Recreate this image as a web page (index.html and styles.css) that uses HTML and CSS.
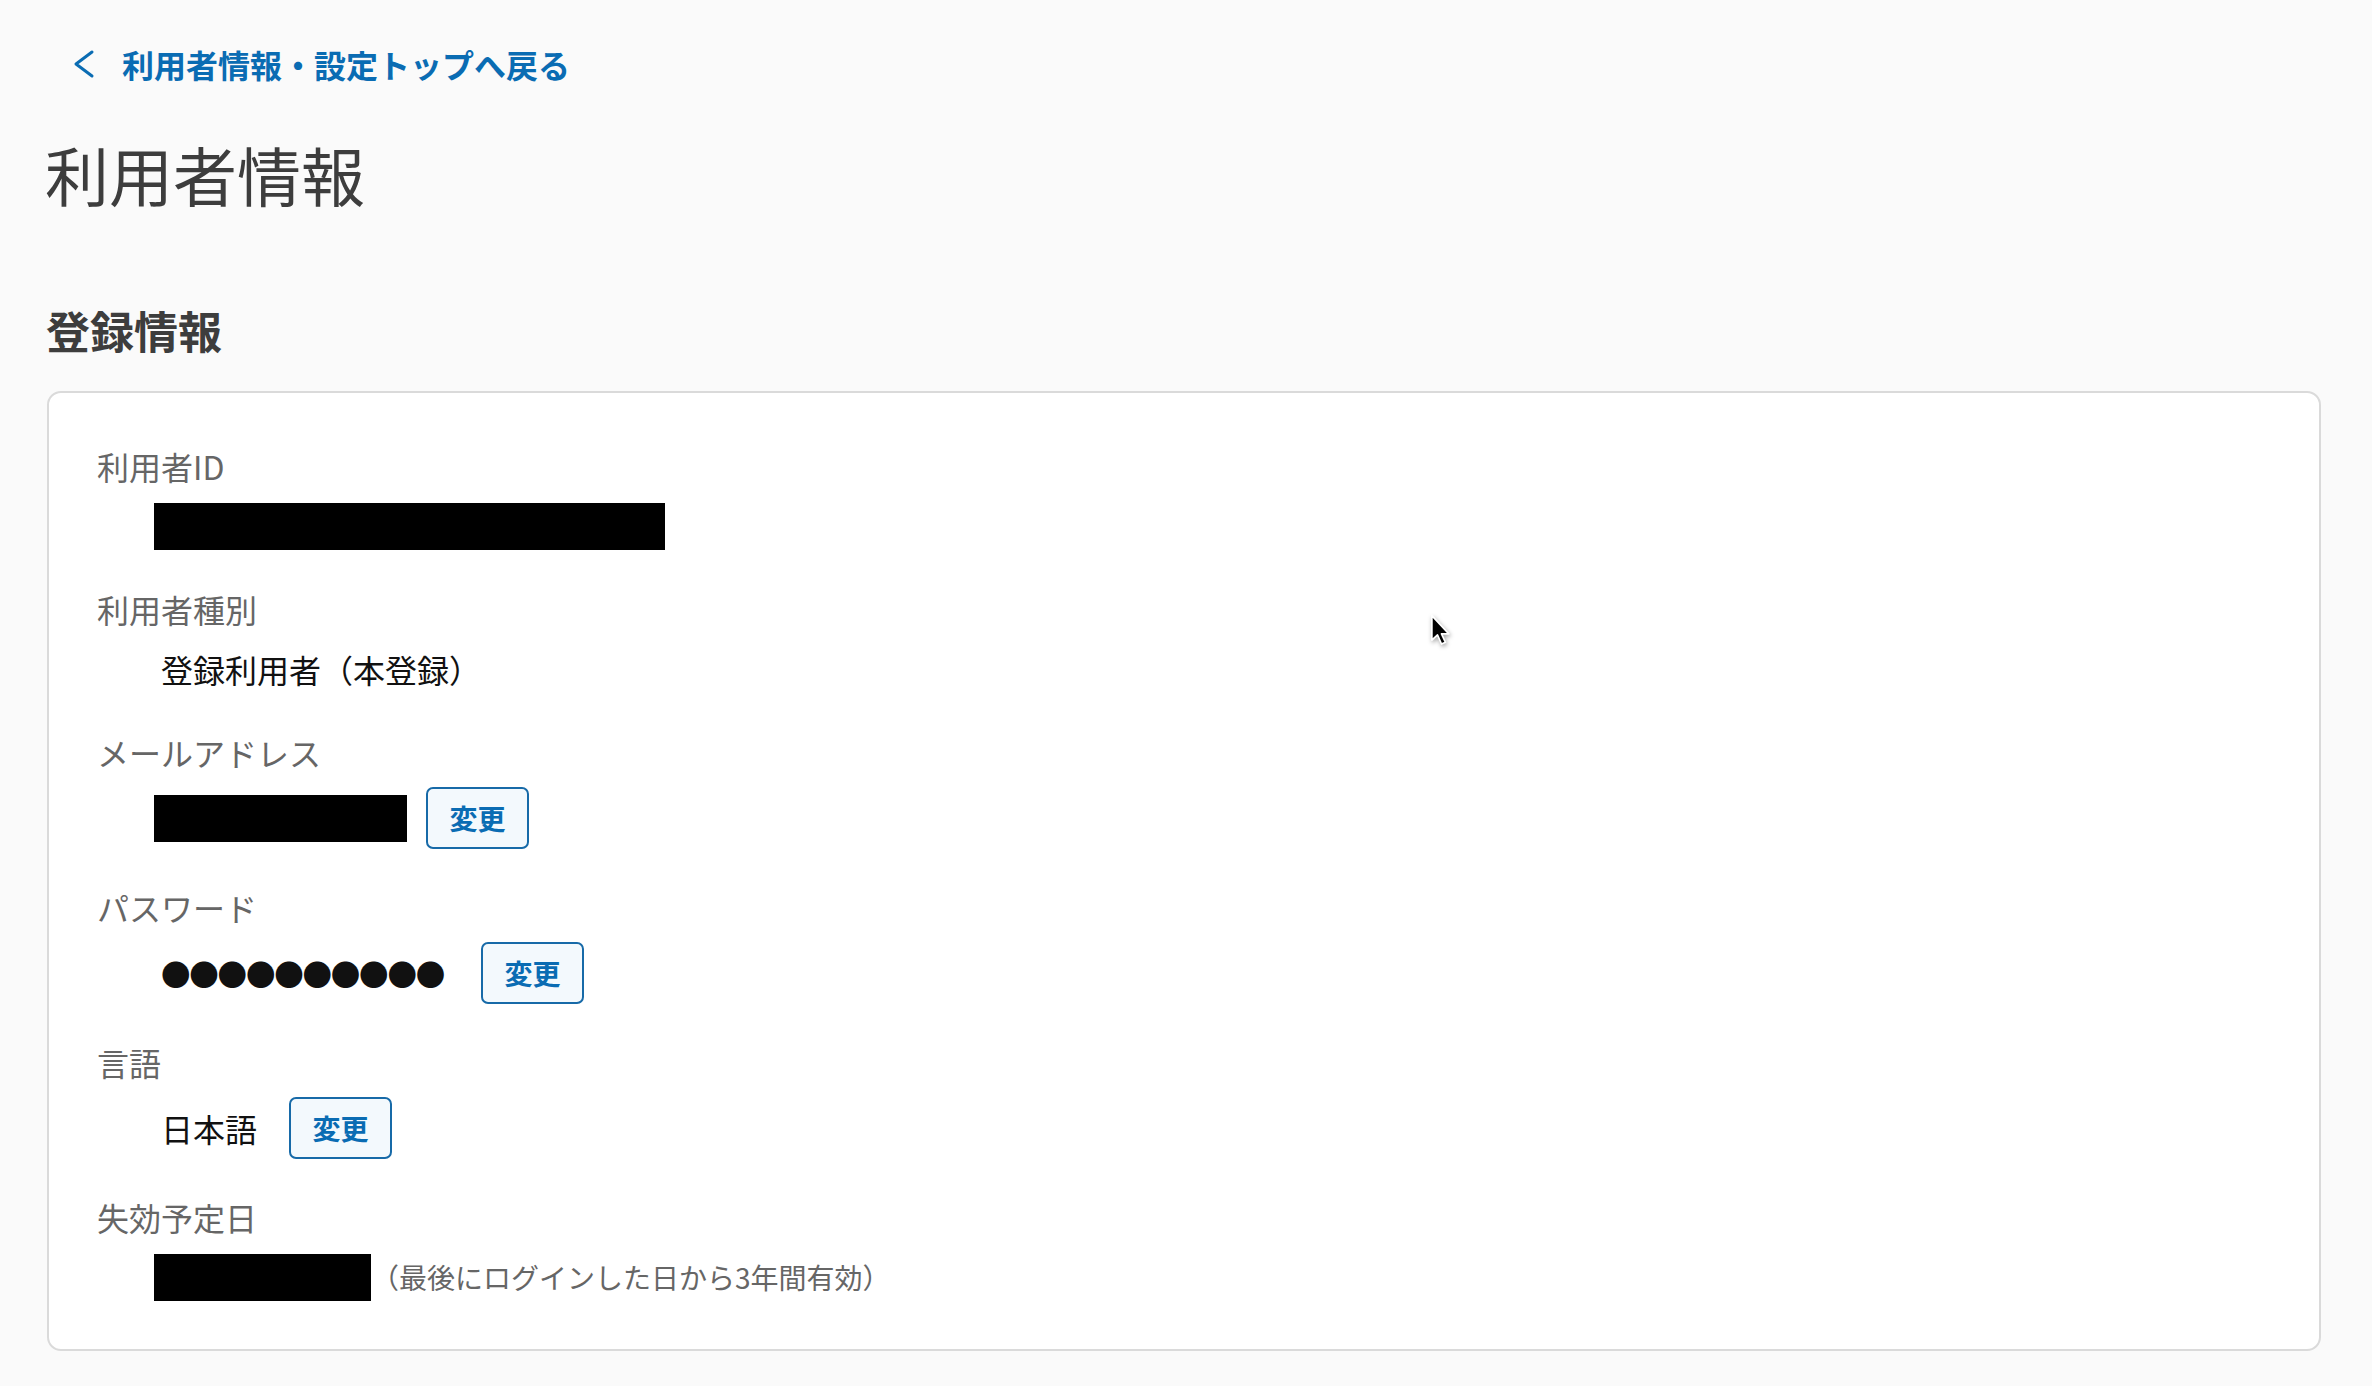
FILE: index.html
```html
<!DOCTYPE html>
<html lang="ja">
<head>
<meta charset="utf-8">
<title>利用者情報</title>
<link rel="stylesheet" href="styles.css">
</head>
<body>
<main class="page">
  <a class="back-link" href="#">
    <svg class="back-icon" width="24" height="30" viewBox="0 0 24 30" aria-hidden="true"><path d="M20 3 L4 15 L20 27" fill="none" stroke="currentColor" stroke-width="3" stroke-linecap="round" stroke-linejoin="round"/></svg>
    <span>利用者情報・設定トップへ戻る</span>
  </a>
  <h1 class="page-title">利用者情報</h1>
  <h2 class="section-title">登録情報</h2>
  <section class="card">
    <dl class="info-list">
      <div class="info-item">
        <dt class="info-label">利用者ID</dt>
        <dd class="value-row"><span class="redacted redacted-id"></span></dd>
      </div>
      <div class="info-item">
        <dt class="info-label">利用者種別</dt>
        <dd class="value-row"><span class="value-text">登録利用者（本登録）</span></dd>
      </div>
      <div class="info-item">
        <dt class="info-label">メールアドレス</dt>
        <dd class="value-row"><span class="redacted redacted-mail"></span><button class="change-btn" type="button">変更</button></dd>
      </div>
      <div class="info-item">
        <dt class="info-label">パスワード</dt>
        <dd class="value-row"><span class="value-text password">●●●●●●●●●●</span><button class="change-btn" type="button">変更</button></dd>
      </div>
      <div class="info-item">
        <dt class="info-label">言語</dt>
        <dd class="value-row"><span class="value-text">日本語</span><button class="change-btn" type="button">変更</button></dd>
      </div>
      <div class="info-item">
        <dt class="info-label">失効予定日</dt>
        <dd class="value-row"><span class="redacted redacted-date"></span><span class="value-note">（最後にログインした日から3年間有効）</span></dd>
      </div>
    </dl>
  </section>
  <svg class="cursor" width="23" height="34" viewBox="0 0 20 30" aria-hidden="true"><path d="M1.5 1.5 L1.5 23 L6.5 18.5 L10 26.5 L13.5 25 L10 17.5 L16.5 17.5 Z" fill="#000" stroke="#fff" stroke-width="1.5" stroke-linejoin="round"/></svg>
</main>
</body>
</html>
```

FILE: styles.css
```css
* { box-sizing: border-box; }

html, body {
  margin: 0;
  padding: 0;
  background: #fafafa;
}

body {
  font-family: "Noto Sans CJK JP", "Noto Sans", sans-serif;
  color: #3d3d3d;
}

.page {
  position: relative;
  padding: 40px 51px 40px 47px;
  min-height: 1386px;
}

.back-link {
  display: flex;
  align-items: center;
  height: 48px;
  padding-left: 25px;
  color: #0a6cb3;
  text-decoration: none;
  font-size: 32px;
  font-weight: 700;
  line-height: 48px;
}

.back-icon {
  flex: none;
  margin-right: 26px;
}

.page-title {
  margin: 37px 0 0 -2px;
  font-size: 64px;
  font-weight: 400;
  line-height: 96px;
  color: #3d3d3d;
}

.section-title {
  margin: 76px 0 0 -1px;
  font-size: 44px;
  font-weight: 700;
  line-height: 66px;
  color: #3d3d3d;
}

.card {
  margin-top: 28px;
  background: #fff;
  border: 2px solid #dadada;
  border-radius: 14px;
  padding: 52px 48px 47px 48px;
}

.info-list {
  margin: 0;
  display: flex;
  flex-direction: column;
  gap: 37px;
}

.info-label {
  font-size: 32px;
  line-height: 42px;
  color: #666;
}

.value-row {
  margin: 14px 0 0 0;
  padding-left: 57px;
  min-height: 50px;
  display: flex;
  align-items: center;
}

.value-text {
  padding: 0 13px 0 7px;
  font-size: 32px;
  line-height: 48px;
  color: #111;
}

.password {
  font-size: 29.5px;
  letter-spacing: -1.2px;
  padding-right: 18px;
}

.redacted {
  display: inline-block;
  height: 47px;
  background: #000;
}

.redacted-id { width: 511px; }
.redacted-mail { width: 253px; }
.redacted-date { width: 217px; }

.value-note {
  font-size: 28px;
  line-height: 42px;
  color: #666;
}

.change-btn {
  margin-left: 19px;
  width: 103px;
  height: 62px;
  padding: 0;
  border: 2px solid #176aa8;
  border-radius: 7px;
  background: #f3f9fd;
  color: #0a6cb3;
  font-family: "Noto Sans CJK JP", "Noto Sans", sans-serif;
  font-size: 28px;
  font-weight: 700;
  line-height: 1;
}

.cursor {
  position: absolute;
  left: 1430px;
  top: 614px;
  filter: drop-shadow(1px 2px 2px rgba(0,0,0,0.35));
}
```
